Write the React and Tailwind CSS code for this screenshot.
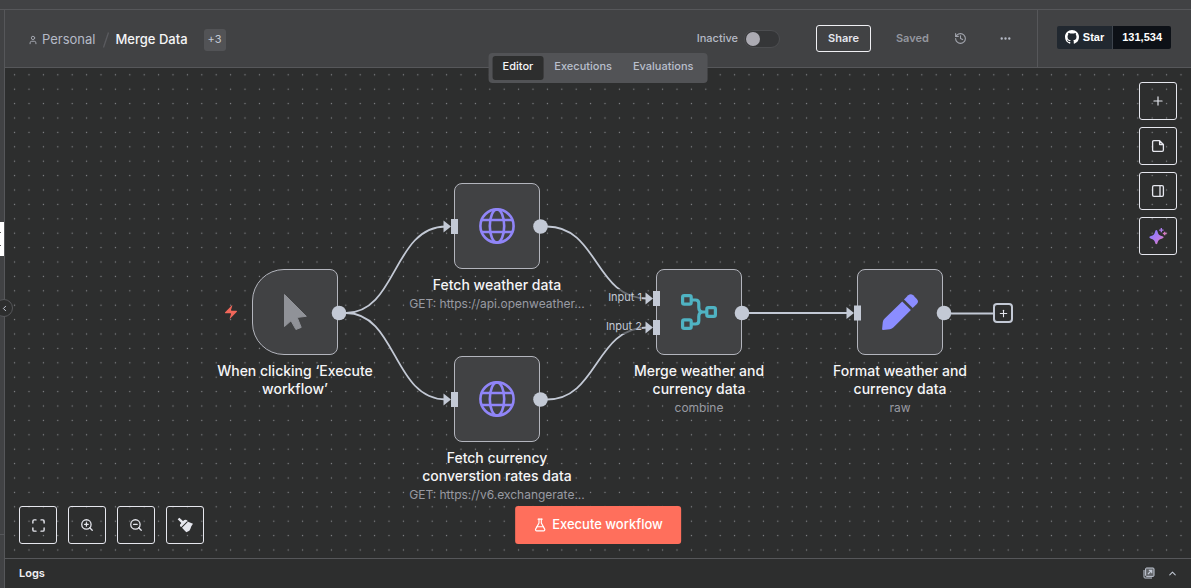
import React from "react";
import {
  User,
  History,
  Ellipsis,
  Plus,
  ZoomIn,
  ZoomOut,
  Maximize,
  FlaskConical,
  ChevronLeft,
  ChevronUp,
} from "lucide-react";

const LINE = "#c3c9d5";

function BoltIcon() {
  return (
    <svg viewBox="0 0 24 24" className="size-4" fill="#f1675a" aria-hidden="true">
      <path d="M4 14a1 1 0 0 1-.78-1.63l9.9-10.2a.5.5 0 0 1 .86.46l-1.92 6.02A1 1 0 0 0 13 10h7a1 1 0 0 1 .78 1.63l-9.9 10.2a.5.5 0 0 1-.86-.46l1.92-6.02A1 1 0 0 0 11 14z" />
    </svg>
  );
}

function CursorIcon() {
  return (
    <svg viewBox="0 0 36 36" className="size-9" fill="#909298" stroke="#909298" strokeWidth="1" strokeLinejoin="round" aria-hidden="true">
      <path d="M7.5 0.5V32.5L14 26.8L18.9 35.5L24.2 33.4L20.2 23.4L29.3 22.3Z" />
    </svg>
  );
}

function GlobeIcon() {
  return (
    <svg viewBox="0 0 36 36" className="size-9" fill="none" stroke="#9085f8" strokeWidth="2.6" aria-hidden="true">
      <circle cx="18" cy="18" r="16.6" />
      <ellipse cx="18" cy="18" rx="7.2" ry="16.6" />
      <path d="M2.6 12H33.4M2.6 24H33.4" />
    </svg>
  );
}

function MergeIcon() {
  return (
    <svg viewBox="0 0 36 36" className="size-9" fill="none" stroke="#4fb3c3" strokeWidth="3.2" aria-hidden="true">
      <rect x="1.6" y="1.6" width="8.6" height="8.6" rx="1.6" />
      <rect x="1.6" y="25.8" width="8.6" height="8.6" rx="1.6" />
      <rect x="25.8" y="13.7" width="8.6" height="8.6" rx="1.6" />
      <path d="M10.5 6H14.5Q17.8 6 17.8 9.3V13.5Q17.8 18 22 18H25.8M10.5 30H14.5Q17.8 30 17.8 26.7V22.5Q17.8 18 22 18" />
    </svg>
  );
}

function PenIcon() {
  return (
    <svg viewBox="0 0 36 36" className="size-9" fill="#8b8dff" aria-hidden="true">
      <path d="M20.2 7.4L28.9 15.9L11.6 33.2Q10 34.8 8 35.2L1 36Q0 36 .1 35L.8 28Q1.1 26 2.7 24.6Z" />
      <path d="M22 5.5L26.2 1.3Q28.7-1 31.2 1.3L34.8 4.9Q37.2 7.4 34.8 9.9L30.7 14Z" />
    </svg>
  );
}

function NoteIcon() {
  return (
    <svg viewBox="0 0 14 14" className="size-[14px]" fill="none" stroke="currentColor" strokeWidth="1.3" strokeLinejoin="round" aria-hidden="true">
      <path d="M2.3 1.7H8.6L12.4 5.5V11Q12.4 12.3 11.1 12.3H2.9Q1.6 12.3 1.6 11V3Q1.6 1.7 2.9 1.7M8.6 1.7V5.5H12.4" />
    </svg>
  );
}

function PanelIcon() {
  return (
    <svg viewBox="0 0 14 14" className="size-[14px]" fill="none" stroke="currentColor" strokeWidth="1.3" aria-hidden="true">
      <rect x="1.6" y="1.6" width="10.8" height="10.8" rx="1.4" />
      <path d="M9 1.6V12.4" />
    </svg>
  );
}

function SparkleIcon() {
  return (
    <svg viewBox="0 0 54 54" className="size-[18px]" aria-hidden="true">
      <defs>
        <linearGradient id="spark" x1="0" y1="0" x2="1" y2="1">
          <stop offset="0.2" stopColor="#8f7bff" />
          <stop offset="0.6" stopColor="#b57bea" />
          <stop offset="1" stopColor="#f07a9a" />
        </linearGradient>
      </defs>
      <path d="M22 9Q25 9 26 15Q28 25 38 27Q44 28 44 31Q44 34 38 35Q28 37 26 46Q25 52 22 52Q19 52 18 46Q16 37 6 35Q1 34 1 31Q1 28 6 27Q16 25 18 15Q19 9 22 9Z" fill="url(#spark)" />
      <path d="M37 3V16M30.5 9.500H43.500" stroke="#a97bea" strokeWidth="4" />
      <path d="M47 14V25M41.500 19.500H52.500" stroke="#d27ac0" strokeWidth="4" />
    </svg>
  );
}

function BroomIcon() {
  return (
    <svg viewBox="0 0 54 54" className="size-[18px]" fill="currentColor" aria-hidden="true">
      <path d="M5 10L10 5L21 15Q27 10 32 12L34 15L16 33L12 31Q10 27 16 21Z" />
      <path d="M36 17L51 23L46 31L43 39L40 44L31 49L25 43L18 35Z" />
    </svg>
  );
}

function GithubIcon() {
  return (
    <svg viewBox="0 0 16 16" className="size-[14px]" fill="currentColor" aria-hidden="true">
      <path d="M8 0c4.42 0 8 3.58 8 8a8.013 8.013 0 0 1-5.45 7.59c-.4.08-.55-.17-.55-.38 0-.27.01-1.13.01-2.2 0-.75-.25-1.23-.54-1.48 1.78-.2 3.65-.88 3.65-3.95 0-.88-.31-1.59-.82-2.15.08-.2.36-1.02-.08-2.12 0 0-.67-.22-2.2.82-.64-.18-1.32-.27-2-.27-.68 0-1.36.09-2 .27-1.53-1.03-2.2-.82-2.2-.82-.44 1.1-.16 1.92-.08 2.12-.51.56-.82 1.28-.82 2.15 0 3.06 1.86 3.75 3.64 3.95-.23.2-.44.55-.51 1.07-.46.21-1.61.55-2.33-.66-.15-.24-.6-.83-1.23-.82-.67.01-.27.38.01.53.34.19.73.9.82 1.13.16.45.68 1.31 2.69.94 0 .67.01 1.3.01 1.49 0 .21-.15.45-.55.38A7.995 7.995 0 0 1 0 8c0-4.42 3.58-8 8-8Z" />
    </svg>
  );
}

function PopOutIcon() {
  return (
    <svg viewBox="0 0 12 12" className="size-3" fill="none" stroke="currentColor" aria-hidden="true">
      <rect x="2.600" y="1" width="8.400" height="8.400" rx="1" fill="currentColor" fillOpacity="0.35" />
      <path d="M1 3V10Q1 11 2 11H9" />
      <path d="M5 7L8.500 3.500M5.800 3.300H8.700V6.200" strokeWidth="1.200" />
    </svg>
  );
}

function DotGrid() {
  return (
    <svg className="absolute inset-0 size-full" aria-hidden="true">
      <defs>
        <pattern id="dots" x="2.4" y="-0.4" width="14.4" height="14.4" patternUnits="userSpaceOnUse">
          <circle cx="7.2" cy="7.2" r="0.65" fill="#8a8b90" />
        </pattern>
      </defs>
      <rect width="100%" height="100%" fill="url(#dots)" />
    </svg>
  );
}

const inputs = [
  [446, 158.5],
  [446, 331.5],
  [648, 230.5],
  [648, 259.5],
  [849, 245],
];
const outputs = [
  [334, 245],
  [535.5, 158.5],
  [535.5, 331.5],
  [737, 245],
  [939, 245],
];

function Connections() {
  return (
    <svg className="pointer-events-none absolute inset-0 size-full" aria-hidden="true">
      <g fill="none" stroke={LINE} strokeWidth="1.8">
        <path d="M341 245C392 245 388 158.500 441 158.500" />
        <path d="M341 245C392 245 388 331.500 441 331.500" />
        <path d="M542 158.500C593 158.500 590 230.500 642 230.500" />
        <path d="M542 331.500C593 331.500 590 259.500 642 259.500" />
        <path d="M744 245H844" />
        <path d="M946 245.500H989" />
      </g>
      {inputs.map(([x, y]) => (
        <g key={`${x}-${y}`} fill={LINE}>
          <rect x={x} y={y - 7.5} width="7" height="15" />
          <path d={`M${x - 7.5} ${y - 6}L${x} ${y}L${x - 7.5} ${y + 6}Z`} />
        </g>
      ))}
      {outputs.map(([x, y]) => (
        <circle key={`${x}-${y}`} cx={x} cy={y} r="7.300" fill={LINE} />
      ))}
    </svg>
  );
}

function Node({ place, shape = "rounded-lg", icon, title, subtitle }) {
  return (
    <div className={`absolute flex w-[172px] flex-col items-center text-center ${place}`}>
      <div className={`flex size-[86px] items-center justify-center border border-[#b3b5bd] bg-[#414244] ${shape}`}>
        {icon}
      </div>
      <div className="mt-[7px] text-[14px] leading-[18px] font-medium whitespace-pre text-[#f5f5f7]">{title}</div>
      {subtitle && (
        <div className="text-[12px] leading-[19px] whitespace-nowrap text-[#989aa2]">{subtitle}</div>
      )}
    </div>
  );
}

function ToolButton({ label, children }) {
  return (
    <button
      type="button"
      aria-label={label}
      className="flex size-[38px] items-center justify-center rounded-[3px] border border-[#e6e7ee] text-[#e6e7ee]"
    >
      {children}
    </button>
  );
}

function Header() {
  return (
    <header className="relative z-10 flex h-[58px] border-b border-[#56575a] bg-[#414244]">
      <nav aria-label="Breadcrumb" className="flex flex-1 items-center pt-[2px] pl-[23px] text-[13px]">
        <a href="#personal" className="flex items-center gap-1 text-[#b5bac6]">
          <User size={10} strokeWidth={2.4} className="text-[#a2a5ae]" />
          Personal
        </a>
        <svg viewBox="0 0 8 16" className="mx-[6px] h-4 w-2" stroke="#5a5b5f" strokeWidth="1.300" aria-hidden="true">
          <path d="M1.500 15.500L6.500 0.500" />
        </svg>
        <span className="font-medium text-[#f5f5f7]">Merge Data</span>
        <button type="button" className="ml-4 h-[22px] rounded-[3px] bg-[#525356] px-1 text-[11px] text-[#c3c9d5]">
          +3
        </button>
      </nav>

      <div className="flex items-center text-[11px]">
        <label className="flex items-center gap-[6px] font-medium text-[#b5bac6]">
          Inactive
          <input
            type="checkbox"
            role="switch"
            className="h-[18px] w-9 appearance-none rounded-full border border-[#4c4d50] bg-[#353638] before:m-px before:block before:size-[14px] before:rounded-full before:bg-[#acabb3]"
          />
        </label>
        <button type="button" className="ml-9 h-[27px] rounded-[3px] border border-[#f0f0f4] px-[11px] font-semibold text-[#e6e7ee]">
          Share
        </button>
        <span className="ml-[25px] font-semibold text-[#94969f]">Saved</span>
        <button type="button" aria-label="History" className="ml-[25px] text-[#a2a5ae]">
          <History size={13} strokeWidth={2} />
        </button>
        <button type="button" aria-label="More" className="mr-[25px] ml-8 text-[#b5bac6]">
          <Ellipsis size={13} strokeWidth={2.4} />
        </button>
      </div>

      <div className="flex items-center border-l border-[#56575a] pr-5 pl-[19px] pb-[3px]">
        <a
          href="#star"
          className="flex h-[23px] overflow-hidden rounded-[2px] font-['Liberation_Sans',sans-serif] text-[11px] leading-[23px] font-bold text-white"
        >
          <span className="flex items-center gap-1 border-r border-[#3d444d] bg-[#212830] px-2">
            <GithubIcon />
            Star
          </span>
          <span className="bg-[#0d1117] px-[9px]">131,534</span>
        </a>
      </div>

      <nav
        aria-label="Views"
        className="absolute top-[43px] left-1/2 flex -translate-x-1/2 gap-px rounded bg-[#525356] px-1 py-[3px] text-[11px] leading-[21px] font-medium text-[#b9bfcc]"
      >
        <a href="#editor" aria-current="page" className="rounded-[3px] bg-[#2d2e2e] px-[10px] pb-[3px] text-[#f5f5f7]">
          Editor
        </a>
        <a href="#executions" className="px-[10px] pb-[3px]">Executions</a>
        <a href="#evaluations" className="px-[10px] pb-[3px]">Evaluations</a>
      </nav>
    </header>
  );
}

function Canvas() {
  return (
    <main className="relative flex-1 overflow-hidden bg-[#2d2e2e]">
      <DotGrid />

      <div className="absolute top-[236px] left-[218px]">
        <BoltIcon />
      </div>
      <Node place="top-[201px] left-[204px]" shape="rounded-lg rounded-l-[32px]" icon={<CursorIcon />} title={"When clicking ‘Execute\nworkflow’"} />
      <Node place="top-[115px] left-[406px]" icon={<GlobeIcon />} title="Fetch weather data" subtitle="GET: https://api.openweather..." />
      <Node place="top-[288px] left-[406px]" icon={<GlobeIcon />} title={"Fetch currency\nconverstion rates data"} subtitle="GET: https://v6.exchangerate..." />
      <Node place="top-[201px] left-[608px]" icon={<MergeIcon />} title={"Merge weather and\ncurrency data"} subtitle="combine" />
      <Node place="top-[201px] left-[809px]" icon={<PenIcon />} title={"Format weather and\ncurrency data"} subtitle="raw" />
      <Connections />

      <div className="absolute top-[221px] right-[calc(100%-637px)] flex flex-col gap-[13px] text-right text-[11px] leading-4 text-[#c3c9d5]">
        <span className="bg-[#2d2e2e]/60">Input 1</span>
        <span className="bg-[#2d2e2e]/60">Input 2</span>
      </div>

      <button
        type="button"
        aria-label="Add node"
        className="absolute top-[235px] left-[988px] flex size-5 items-center justify-center rounded border-2 border-[#c3c9d5] bg-[#2d2e2e] text-[#e6e7ee]"
      >
        <Plus size={11} strokeWidth={2.400} />
      </button>

      <div className="absolute top-[14px] right-[14px] flex flex-col gap-[7px]">
        <ToolButton label="Add"><Plus size={14} strokeWidth={2} /></ToolButton>
        <ToolButton label="Sticky note"><NoteIcon /></ToolButton>
        <ToolButton label="Toggle panel"><PanelIcon /></ToolButton>
        <ToolButton label="Assistant"><SparkleIcon /></ToolButton>
      </div>

      <div className="absolute bottom-[14px] left-[14px] flex gap-[11px]">
        <ToolButton label="Fit view"><Maximize size={15} strokeWidth={2.200} /></ToolButton>
        <ToolButton label="Zoom in"><ZoomIn size={14} strokeWidth={2.200} /></ToolButton>
        <ToolButton label="Zoom out"><ZoomOut size={14} strokeWidth={2.200} /></ToolButton>
        <ToolButton label="Tidy up"><BroomIcon /></ToolButton>
      </div>

      <button
        type="button"
        className="absolute bottom-[14px] left-1/2 flex h-[38px] -translate-x-1/2 items-center gap-[5px] rounded-[3px] bg-[#ff6f5c] px-[18px] text-[13px] font-medium whitespace-nowrap text-white"
      >
        <FlaskConical size={14} strokeWidth={2} />
        Execute workflow
      </button>
    </main>
  );
}

export default function App() {
  return (
    <div className="flex min-h-screen flex-col bg-[#414244] font-[Inter,sans-serif]">
      <div className="h-[10px] border-b border-[#56575a]" />
      <div className="flex flex-1">
        <aside className="relative z-20 flex w-[5px] flex-col border-r border-[#56575a] bg-[#414244]">
          <div className="mt-[212px] flex h-[34px] flex-col justify-center gap-3 bg-white">
            <span className="h-px w-px bg-[#555]" />
            <span className="h-px w-px bg-[#555]" />
          </div>
          <div className="mt-auto h-[54px] border-t border-[#56575a]" />
          <button
            type="button"
            aria-label="Expand sidebar"
            className="absolute top-[289px] right-[-9px] flex size-[18px] items-center justify-center rounded-full border border-[#56575a] bg-[#2d2e2e] text-[#c3c9d5]"
          >
            <ChevronLeft size={9} strokeWidth={2.600} />
          </button>
        </aside>
        <div className="flex min-w-0 flex-1 flex-col">
          <Header />
          <Canvas />
          <footer className="flex h-[30px] items-center border-t border-[#56575a] bg-[#2d2e2e] pr-[13px] pb-px pl-[14px] text-[#c3c9d5]">
            <h2 className="flex-1 text-[11px] font-semibold text-[#f0f0f4]">Logs</h2>
            <button type="button" aria-label="Pop out logs" className="mr-3">
              <PopOutIcon />
            </button>
            <button type="button" aria-label="Open logs">
              <ChevronUp size={11} strokeWidth={2.200} />
            </button>
          </footer>
        </div>
      </div>
    </div>
  );
}
